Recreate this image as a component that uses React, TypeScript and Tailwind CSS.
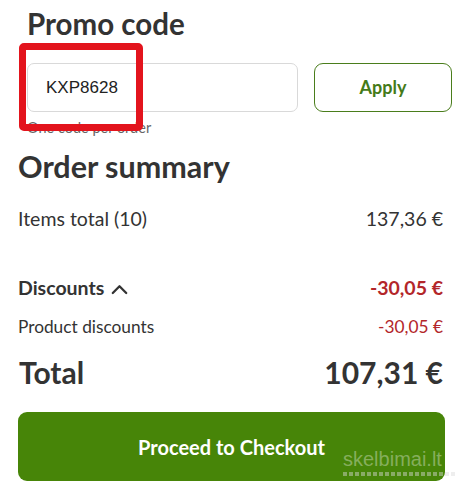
import React from 'react';

function ChevronUp() {
  return (
    <svg width="17" height="11" viewBox="0 0 17 11" fill="none" className="ml-[7px] mt-[3px]">
      <path d="M1.8 9 L8.5 2.3 L15.2 9" stroke="#333" strokeWidth="2.3" strokeLinecap="round" strokeLinejoin="round" />
    </svg>
  );
}

export default function App() {
  return (
    <div
      className="relative h-[492px] w-[470px] overflow-hidden bg-white text-[#333]"
      style={{ fontFamily: 'Lato, "Noto Sans", sans-serif' }}
    >
      <div className="pl-[27px] pr-[18px] pt-[4px]">
        <h2 className="text-[29.5px] font-bold leading-[40px]">Promo code</h2>
        <div className="mt-[19px] flex gap-[16px]">
          <input
            readOnly
            value="KXP8628"
            className="h-[49px] w-[271px] shrink-0 rounded-[7px] border border-[#d9d9d9] px-[18px] text-[17px] text-[#222] outline-none"
            style={{ fontFamily: '"Liberation Sans", Arial, sans-serif' }}
          />
          <button className="h-[49px] w-[138px] shrink-0 rounded-[9px] border border-[#4a7d1c] text-[18px] font-bold text-[#447a18]">
            Apply
          </button>
        </div>
        <p className="mt-[8px] text-[14.5px] leading-[16px] text-[#666]">One code per order</p>
      </div>

      <div className="pl-[18px] pr-[27px]">
        <h2 className="mt-[12px] text-[30.5px] font-bold leading-[36px]">Order summary</h2>
        <div className="mt-[22px] flex items-center justify-between text-[19.5px] leading-[26px]">
          <span>Items total (10)</span>
          <span>137,36 €</span>
        </div>
        <div className="mt-[43px] flex items-center justify-between text-[19.5px] leading-[26px]">
          <span className="flex items-center font-bold">
            Discounts
            <ChevronUp />
          </span>
          <span className="font-bold text-[#b3262a]">-30,05 €</span>
        </div>
        <div className="mt-[14px] flex items-center justify-between text-[17.3px] leading-[24px]">
          <span>Product discounts</span>
          <span className="text-[#b3262a]">-30,05 €</span>
        </div>
        <div className="mt-[13px] flex items-center justify-between text-[30px] font-bold leading-[40px]">
          <span className="pl-[1px]">Total</span>
          <span>107,31 €</span>
        </div>
        <button className="mt-[20px] h-[69px] w-[427px] rounded-[9px] bg-[#478508] text-[20px] font-bold text-white">
          Proceed to Checkout
        </button>
      </div>

      {/* red marker drawn over the code field */}
      <div className="pointer-events-none absolute left-[19px] top-[43px] h-[88px] w-[124px] rounded-[5px] border-[7px] border-[#e3141d]" />

      {/* watermark */}
      <div className="pointer-events-none absolute left-[343px] top-[449px] flex flex-col items-start">
        <span
          className="whitespace-nowrap text-[20px] leading-[21px] text-white/35"
          style={{ fontFamily: '"Liberation Sans", Arial, sans-serif' }}
        >
          skelbimai.lt
        </span>
        <div className="mt-[2px] flex gap-[2px]">
          {Array.from({ length: 19 }).map((_, i) => (
            <span key={i} className="h-[4px] w-[4px] bg-[#d9d9d9]/45" />
          ))}
        </div>
      </div>
    </div>
  );
}
